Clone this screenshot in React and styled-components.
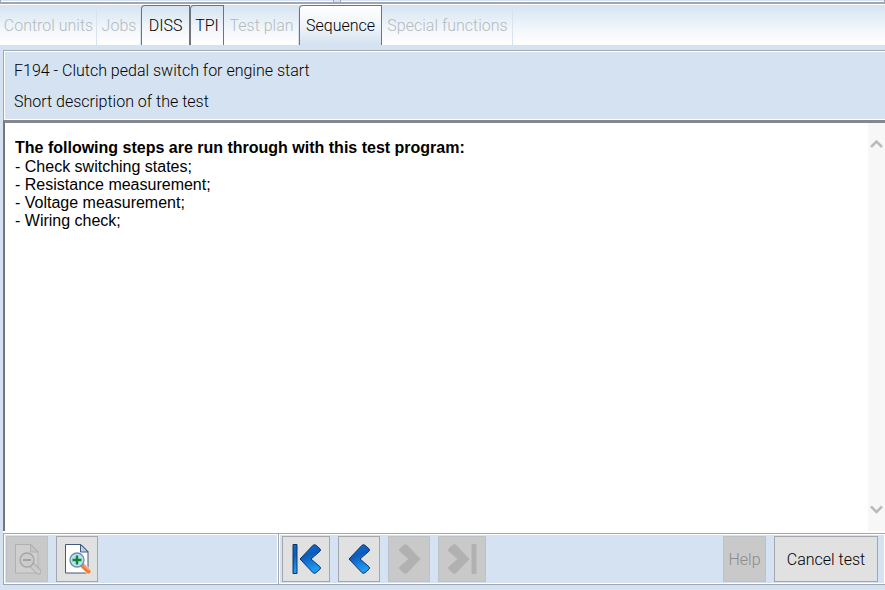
import React, { useState } from 'react'
import styled, { createGlobalStyle } from 'styled-components'

const GlobalStyle = createGlobalStyle`
  * {
    box-sizing: border-box;
  }
  body {
    margin: 0;
    background: #d5e2f1;
  }
  button {
    font: inherit;
    padding: 0;
    margin: 0;
  }
`

const Screen = styled.div`
  display: flex;
  flex-direction: column;
  height: 100vh;
  overflow: hidden;
  background: #d5e2f1;
  color: #000;
  font-family: Roboto, 'Liberation Sans', sans-serif;
  font-weight: 300;
  font-size: 16px;
`

const UpperEdge = styled.div`
  display: grid;
  grid-template-columns: 38fr 62fr;
  gap: 6px;
  height: 4px;
  border-bottom: 2px solid #a2a6b0;
  flex: none;
`

const EdgePane = styled.div`
  border: solid #a2a6b0;
  border-width: 0 1px;
  box-shadow: inset 0 -1px #fff;
`

const TabBar = styled.nav`
  display: flex;
  flex: none;
  height: 41px;
  border-top: 1px solid #fff;
  background: linear-gradient(#d5e4f1, #f4f8fc 65%, #fff);
`

const Tab = styled.button`
  width: ${props => props.$width}px;
  height: 40px;
  padding-bottom: 1px;
  white-space: nowrap;
  color: #000;
  border: 1px solid #70747a;
  border-bottom: 0;
  border-radius: 4px 0 0 0;
  background: ${props =>
    props.$active
      ? 'linear-gradient(#fff, #f2f6fa 45%, #d5e2f1)'
      : 'linear-gradient(#d5e4f1, #f4f8fc 65%, #fff)'};

  &:disabled {
    color: #b4babf;
    border-color: transparent #d8e3ee transparent transparent;
    border-radius: 0;
    background: transparent;
  }
`

const Header = styled.header`
  flex: none;
  margin: 5px 0 0 3px;
  padding: 10px 10px 8px;
  border: solid #a4a8ac;
  border-width: 1px 0 0 1px;
  box-shadow: inset 1px 1px #fff, inset 0 -1px #fff;
`

const HeaderLine = styled.h1`
  margin: 0;
  font-size: 16px;
  font-weight: 300;
  line-height: 20px;

  & + & {
    margin-top: 11px;
  }
`

const Content = styled.main`
  display: flex;
  flex: 1;
  min-height: 0;
  margin-left: 3px;
  border-left: 2px solid #75777c;
  border-top: 3px solid #85878b;
  background: #fff;
`

const Article = styled.article`
  flex: 1;
  padding: 15px 10px;
  font-family: 'Liberation Sans', Arial, sans-serif;
  font-weight: 400;
`

const Heading = styled.h2`
  margin: 0;
  font-size: 16px;
  line-height: 20px;
`

const Steps = styled.ul`
  margin: 0;
  padding: 0;
  list-style: none;
  line-height: 18px;
`

const ScrollTrack = styled.div`
  display: flex;
  flex-direction: column;
  justify-content: space-between;
  width: 17px;
  padding: 12px 0;
  background: #f7f7f7;
`

const ScrollButton = styled.button`
  display: grid;
  place-items: center;
  height: 18px;
  border: 0;
  background: none;
`

const Footer = styled.footer`
  display: grid;
  grid-template-columns: 275fr 607fr;
  flex: none;
  height: 54px;
  margin: 0 0 5px 3px;
  padding-top: 2px;
  background: #fff;
`

const Toolbar = styled.div`
  display: flex;
  gap: 8px;
  padding: 2px 7px 2px 2px;
  border: solid #a2a6ae;
  border-width: 1px 0 1px 1px;
  box-shadow: inset 1px 1px #fff, inset -1px -1px #fff;
  background: #d5e2f1;

  & + & {
    padding-left: 3px;
  }
`

const ToolButton = styled.button`
  display: grid;
  place-items: center;
  width: ${props => props.$width || 42}px;
  height: 46px;
  white-space: nowrap;
  color: #000;
  border: 1px solid #a2a6ae;
  background: #e1e1e1;

  &:disabled {
    color: #8c8c8c;
    border-color: #bcc2c9;
    background: #c9c9c9;
  }
`

const Spacer = styled.div`
  flex: 1;
`

const tabs = [
  { name: 'Control units', width: 97, disabled: true },
  { name: 'Jobs', width: 44, disabled: true },
  { name: 'DISS', width: 49 },
  { name: 'TPI', width: 34 },
  { name: 'Test plan', width: 75, disabled: true },
  { name: 'Sequence', width: 83 },
  { name: 'Special functions', width: 131, disabled: true }
]

const steps = [
  'Check switching states;',
  'Resistance measurement;',
  'Voltage measurement;',
  'Wiring check;'
]

const liveColors = {
  page: '#fff',
  edge: '#43597f',
  fold: '#bdd0ea',
  lens: '#b5e3ee',
  ring: '#6f8fa8',
  sign: '#16803c',
  rim: '#f6ddc8',
  handle: '#ee7c32',
  shine: '#ffc794'
}

const mutedColors = {
  page: '#cfcfcf',
  edge: '#b0b0b0',
  fold: '#c4c4c4',
  lens: '#cbcbcb',
  ring: '#a4a4a4',
  sign: '#999',
  rim: '#a8a8a8',
  handle: '#cdcdcd',
  shine: '#c0c0c0'
}

const ZoomIcon = ({ plus }) => {
  const c = plus ? liveColors : mutedColors
  return (
    <svg width="28" height="32" viewBox="0 0 28 32" aria-hidden="true">
      <path d="M2.5 1.5h15.500l7 7v21.500h-22.500z" fill={c.page} stroke={c.edge} />
      <path d="M17.500 1.500v7.500h7.500z" fill={c.fold} stroke={c.edge} />
      <path d="M19.500 22.500l6 6" stroke={c.rim} strokeWidth="6" strokeLinecap="round" />
      <path d="M19.500 22.500l6 6" stroke={c.handle} strokeWidth="4" strokeLinecap="round" />
      <path d="M20.500 22l5.500 5.500" stroke={c.shine} strokeWidth="1" />
      <circle cx="14" cy="17" r="7" fill={c.lens} stroke={c.ring} strokeWidth="1.300" />
      <path
        d={plus ? 'M9.500 17h9M14 12.500v9' : 'M10 17h8'}
        stroke={c.sign}
        strokeWidth={plus ? 2.4 : 1.6}
      />
    </svg>
  )
}

const NavIcon = ({ bar, flip, muted, id }) => (
  <svg
    width={bar ? 31 : 23}
    height="32"
    viewBox={bar ? '0 0 31 32' : '8 0 23 32'}
    aria-hidden="true"
  >
    <defs>
      <linearGradient id={id} x1="0" y1="0" x2="0.3" y2="1">
        <stop offset="0" stopColor={muted ? '#b1b1b1' : '#1a6fd0'} />
        <stop offset="0.45" stopColor={muted ? '#b1b1b1' : '#0b5cbc'} />
        <stop offset="1" stopColor={muted ? '#b1b1b1' : '#1e9bf8'} />
      </linearGradient>
    </defs>
    <g
      transform={flip ? `translate(${bar ? 31 : 39} 0) scale(-1 1)` : undefined}
      fill={`url(#${id})`}
      stroke={muted ? '#b1b1b1' : '#0d3563'}
      strokeLinejoin="round"
    >
      {bar && <path d="M2 1.500h4v29h-4z" />}
      <path d="M9 16L22 2.300Q23.500 1 25 2.300L29 5.800Q30 7 29 8.200L20 16l9 7.800Q30 25 29 26.200L25 29.700Q23.500 31 22 29.700z" />
    </g>
  </svg>
)

const Chevron = ({ down }) => (
  <svg width="13" height="10" viewBox="0 0 13 10" aria-hidden="true">
    <path
      d={down ? 'M1 1.500l5.500 5.500L12 1.500' : 'M1 8l5.500-5.500L12 8'}
      fill="none"
      stroke="#bababa"
      strokeWidth="2.500"
    />
  </svg>
)

const App = () => {
  const [active, setActive] = useState('Sequence')

  return (
    <Screen>
      <GlobalStyle />
      <UpperEdge>
        <EdgePane />
        <EdgePane />
      </UpperEdge>
      <TabBar>
        {tabs.map(tab => (
          <Tab
            key={tab.name}
            $width={tab.width}
            $active={tab.name === active}
            disabled={tab.disabled}
            onClick={() => setActive(tab.name)}
          >
            {tab.name}
          </Tab>
        ))}
      </TabBar>
      <Header>
        <HeaderLine>F194 - Clutch pedal switch for engine start</HeaderLine>
        <HeaderLine as="p">Short description of the test</HeaderLine>
      </Header>
      <Content>
        <Article>
          <Heading>The following steps are run through with this test program:</Heading>
          <Steps>
            {steps.map(step => (
              <li key={step}>- {step}</li>
            ))}
          </Steps>
        </Article>
        <ScrollTrack>
          <ScrollButton aria-label="Scroll up">
            <Chevron />
          </ScrollButton>
          <ScrollButton aria-label="Scroll down">
            <Chevron down />
          </ScrollButton>
        </ScrollTrack>
      </Content>
      <Footer>
        <Toolbar>
          <ToolButton aria-label="Zoom out" disabled>
            <ZoomIcon />
          </ToolButton>
          <ToolButton aria-label="Zoom in">
            <ZoomIcon plus />
          </ToolButton>
        </Toolbar>
        <Toolbar>
          <ToolButton aria-label="First step" $width={48}>
            <NavIcon id="first" bar />
          </ToolButton>
          <ToolButton aria-label="Previous step">
            <NavIcon id="previous" />
          </ToolButton>
          <ToolButton aria-label="Next step" disabled>
            <NavIcon id="next" flip muted />
          </ToolButton>
          <ToolButton aria-label="Last step" $width={48} disabled>
            <NavIcon id="last" bar flip muted />
          </ToolButton>
          <Spacer />
          <ToolButton $width={43} disabled>
            Help
          </ToolButton>
          <ToolButton $width={104}>Cancel test</ToolButton>
        </Toolbar>
      </Footer>
    </Screen>
  )
}

export default App
